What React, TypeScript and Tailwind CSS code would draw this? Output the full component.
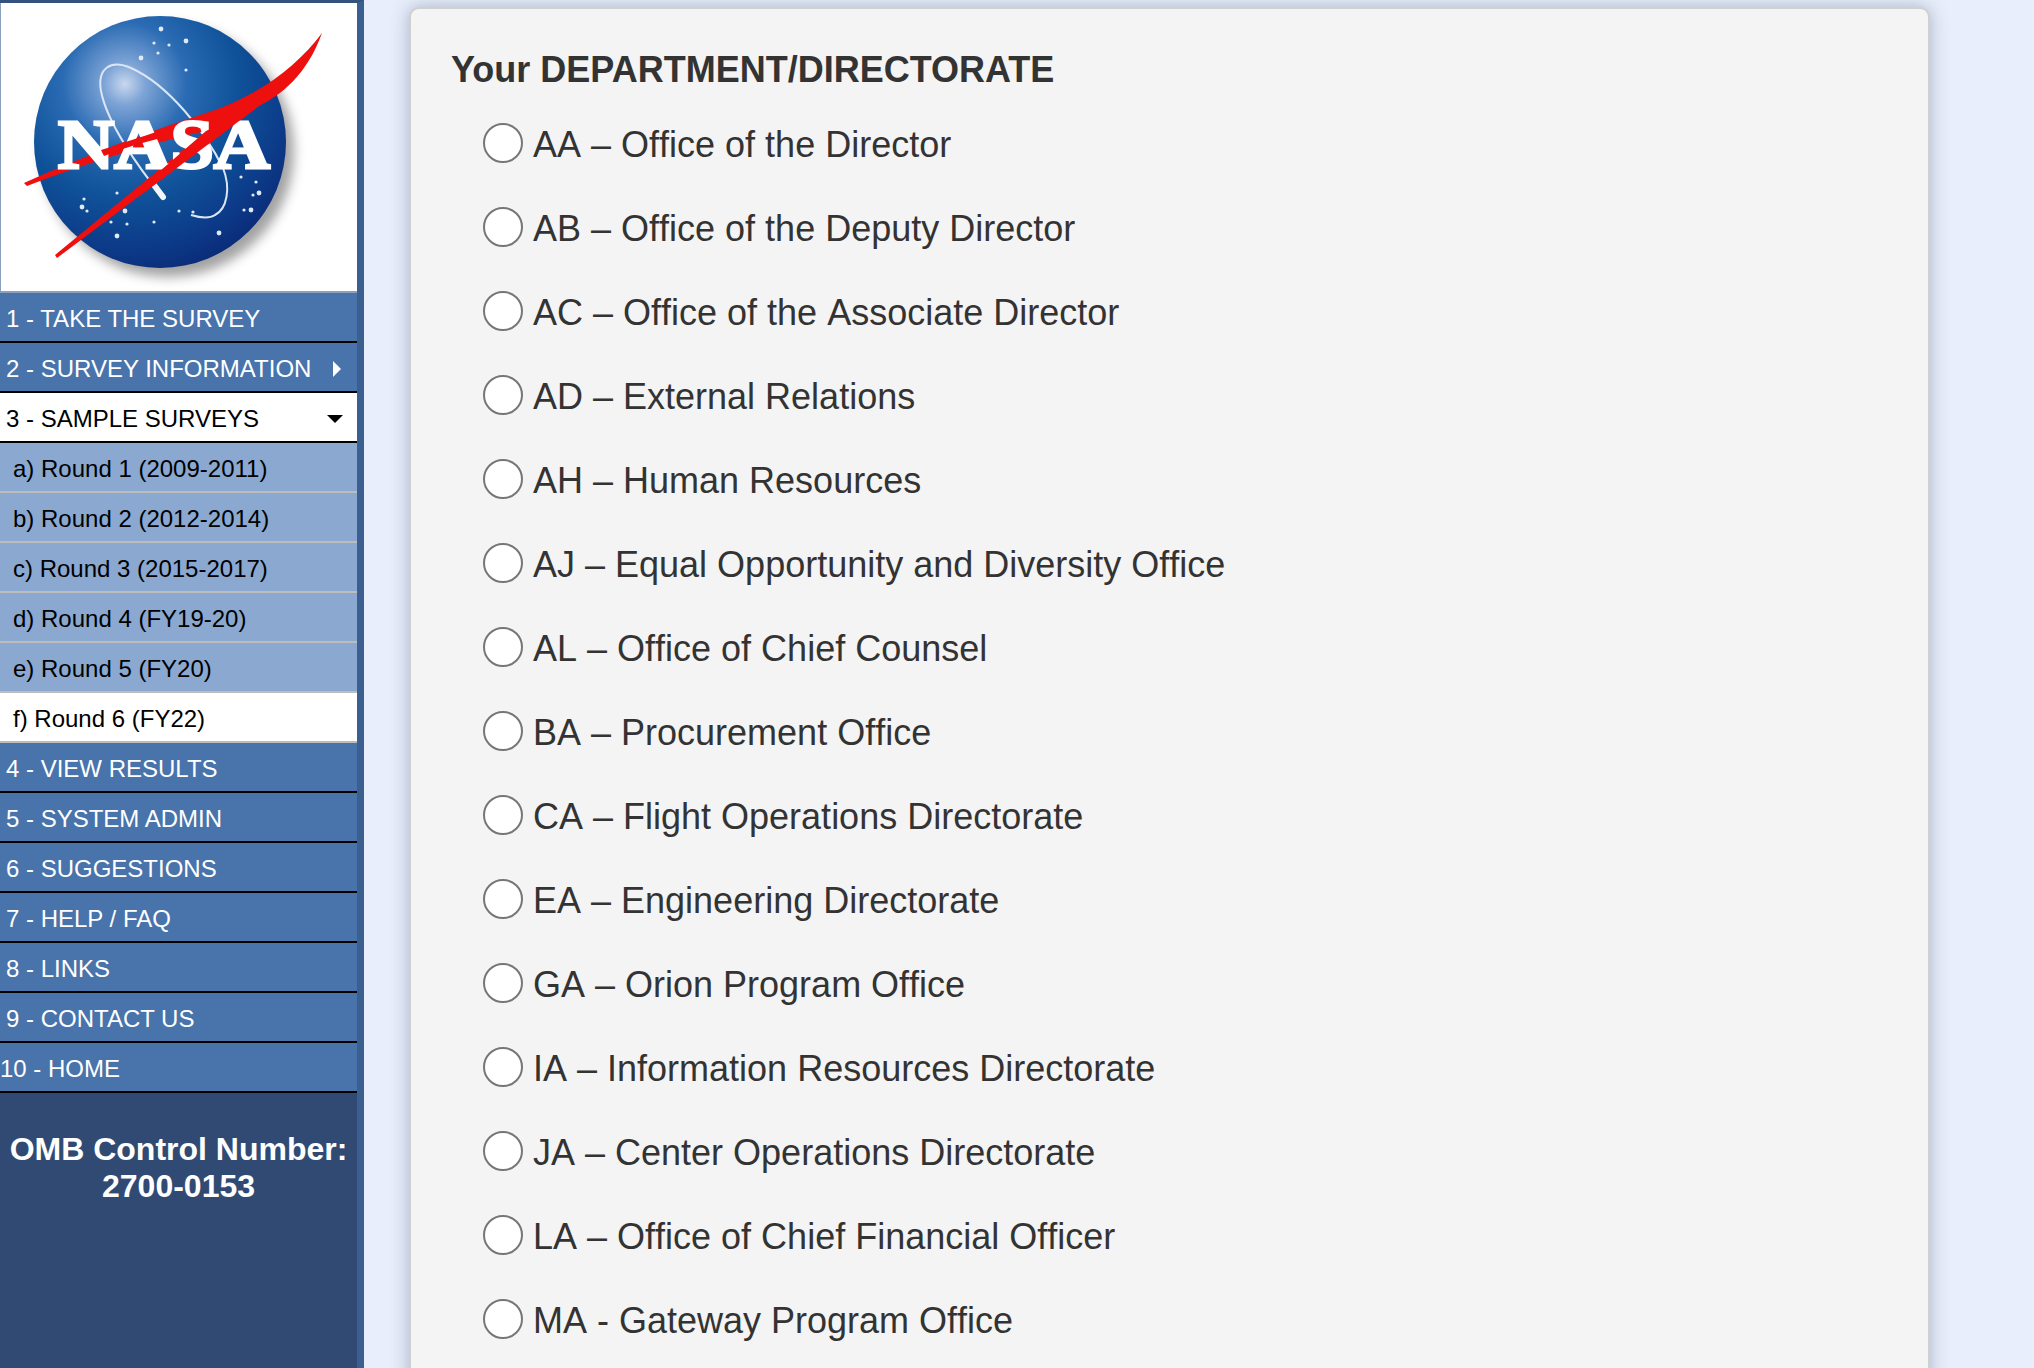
import React from "react";

const departments = [
  "AA – Office of the Director",
  "AB – Office of the Deputy Director",
  "AC – Office of the Associate Director",
  "AD – External Relations",
  "AH – Human Resources",
  "AJ – Equal Opportunity and Diversity Office",
  "AL – Office of Chief Counsel",
  "BA – Procurement Office",
  "CA – Flight Operations Directorate",
  "EA – Engineering Directorate",
  "GA – Orion Program Office",
  "IA – Information Resources Directorate",
  "JA – Center Operations Directorate",
  "LA – Office of Chief Financial Officer",
  "MA - Gateway Program Office",
];

const rounds = [
  "a) Round 1 (2009-2011)",
  "b) Round 2 (2012-2014)",
  "c) Round 3 (2015-2017)",
  "d) Round 4 (FY19-20)",
  "e) Round 5 (FY20)",
];

const lowerMenu = [
  "4 - VIEW RESULTS",
  "5 - SYSTEM ADMIN",
  "6 - SUGGESTIONS",
  "7 - HELP / FAQ",
  "8 - LINKS",
  "9 - CONTACT US",
];

// Meatball logo, text stays real text
function NasaLogo() {
  const stars = [
    [160, 26], [153, 40], [168, 42], [185, 38], [157, 50], [185, 67], [140, 55],
    [240, 174], [255, 179], [258, 190], [252, 192], [243, 207], [250, 207], [178, 208],
    [83, 196], [81, 204], [86, 208], [116, 190], [124, 208], [110, 219], [126, 221],
    [116, 233], [153, 219], [192, 209], [218, 230],
  ];
  return (
    <svg width="356" height="287" viewBox="0 0 356 287">
      <defs>
        <radialGradient id="ball" cx="0.36" cy="0.27" r="0.82">
          <stop offset="0" stopColor="#c9d8ee" />
          <stop offset="0.1" stopColor="#7ea4d6" />
          <stop offset="0.3" stopColor="#2a6bb3" />
          <stop offset="0.55" stopColor="#0f5299" />
          <stop offset="0.8" stopColor="#0c3a88" />
          <stop offset="1" stopColor="#0a2672" />
        </radialGradient>
        <filter id="soft" x="-20%" y="-20%" width="140%" height="140%">
          <feGaussianBlur stdDeviation="6" />
        </filter>
      </defs>
      <circle cx="167" cy="148" r="126" fill="#7a7a7a" opacity="0.7" filter="url(#soft)" />
      <circle cx="159" cy="139" r="126" fill="url(#ball)" />
      {stars.map(([x, y], i) => (
        <circle key={i} cx={x} cy={y} r={i % 3 === 0 ? 2.4 : 1.6} fill="#dfe9f7" />
      ))}
      <path
        d="M160 192 C138 165 106 120 100 88 C96 65 110 56 130 65 C168 82 205 130 222 165 C230 185 226 206 214 212 C208 216 200 215 190 212"
        fill="none"
        stroke="#dbe6f4"
        strokeWidth="2"
      />
      <path d="M150 178 L162 194" stroke="#f2f6fb" strokeWidth="6" strokeLinecap="round" />
      <path
        d="M23 180 C90 150 150 128 205 110 C255 94 295 65 321 30 C306 72 280 92 258 103 L56 255 L54 252 L205 128 C150 140 85 160 26 183 Z"
        fill="#ee0f0f"
      />
      <text
        x="57"
        y="165"
        fontFamily="'Liberation Serif', serif"
        fontWeight="700"
        fontSize="70"
        textLength="212"
        lengthAdjust="spacingAndGlyphs"
        fill="#ffffff"
        stroke="#ffffff"
        strokeWidth="3"
      >
        NASA
      </text>
      <path d="M100 147 C125 139 140 134 158 128 L160 135 C140 140 120 146 103 153 Z" fill="#ee0f0f" />
      <path d="M258 103 L140 192 L136 188 L205 128 Z" fill="#ee0f0f" />
    </svg>
  );
}

function MenuRow({ label, active, arrow }: { label: string; active?: boolean; arrow?: "right" | "down" }) {
  return (
    <div
      className={
        "flex h-[50px] items-center justify-between border-b-2 border-black pl-[6px] pr-[14px] pt-[3px] text-[24px] " +
        (active ? "bg-white text-black" : "bg-[#4873ab] text-white")
      }
    >
      <span>{label}</span>
      {arrow === "right" && (
        <span className="mr-[2px] h-0 w-0 border-y-[8px] border-l-[8px] border-y-transparent border-l-white" />
      )}
      {arrow === "down" && (
        <span className="h-0 w-0 border-x-[8px] border-t-[8px] border-x-transparent border-t-black" />
      )}
    </div>
  );
}

function Sidebar() {
  return (
    <aside className="flex h-full w-[364px] shrink-0 flex-col border-r-[7px] border-t-[3px] border-r-[#3c5f92] border-t-[#34527f] bg-[#314a74]">
      <div className="flex h-[290px] items-start border-b-2 border-l border-[#8aa0bd] bg-white">
        <NasaLogo />
      </div>
      <MenuRow label="1 - TAKE THE SURVEY" />
      <MenuRow label="2 - SURVEY INFORMATION" arrow="right" />
      <MenuRow label="3 - SAMPLE SURVEYS" active arrow="down" />
      {rounds.map((r) => (
        <div
          key={r}
          className="flex h-[50px] items-center border-b-2 border-[#bdbdbd] bg-[#8aa8d0] pl-[13px] pt-[3px] text-[24px] text-black"
        >
          {r}
        </div>
      ))}
      <div className="flex h-[50px] items-center border-b-2 border-[#bdbdbd] bg-white pl-[13px] pt-[3px] text-[24px] text-black">
        f) Round 6 (FY22)
      </div>
      {lowerMenu.map((m) => (
        <MenuRow key={m} label={m} />
      ))}
      <div className="flex h-[50px] items-center border-b-2 border-black bg-[#4873ab] pt-[3px] text-[24px] text-white">
        10 - HOME
      </div>
      <div className="pt-[38px] text-center text-[32px] font-bold leading-[37px] text-white">
        OMB Control Number:
        <br />
        2700-0153
      </div>
    </aside>
  );
}

export default function App() {
  return (
    <div className="flex h-[1368px] w-[2034px] overflow-hidden bg-[#e8eefb] font-['Liberation_Sans',Arial,sans-serif]">
      <Sidebar />
      <main className="min-w-0 flex-1 pl-[45px] pr-[104px] pt-[7px]">
        <div className="h-[1500px] rounded-[10px] border-2 border-[#d0d0d0] bg-[#f4f4f4] pl-[40px] pt-[41px] text-[#333333] shadow-[0_0_18px_rgba(90,110,140,0.45)]">
          <h1 className="text-[36px] font-bold leading-[40px]">Your DEPARTMENT/DIRECTORATE</h1>
          <div className="mt-[21px] flex flex-col pl-[32px] [font-kerning:none]">
            {departments.map((d) => (
              <label key={d} className="flex h-[84px] items-start text-[36px] leading-[42px]">
                <span className="mt-[12px] h-[40px] w-[40px] shrink-0 rounded-full border-2 border-[#767676] bg-white" />
                <span className="ml-[10px] mt-[13px]">{d}</span>
              </label>
            ))}
          </div>
        </div>
      </main>
    </div>
  );
}
